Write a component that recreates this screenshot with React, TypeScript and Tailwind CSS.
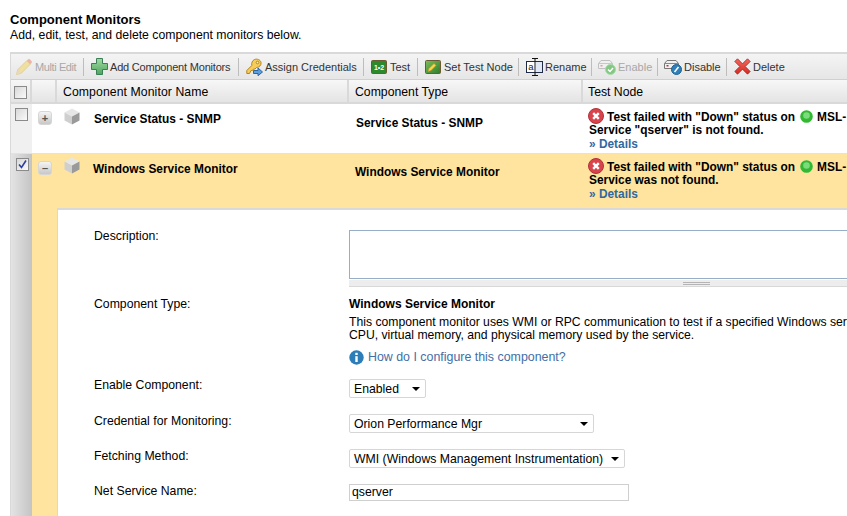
import type { ReactNode } from "react";

const PencilIcon = () => (
  <svg width="18" height="18" viewBox="0 0 18 18">
    <path d="M1.5 16.5l1.2-4.7L11.8 2.7l3.5 3.5-9.1 9.1z" fill="#f0e0a0" stroke="#e0cf98" />
    <path d="M11.8 2.7l1.2-1.2c.6-.6 1.4-.6 2 0l1.5 1.5c.6.6.6 1.4 0 2l-1.2 1.2z" fill="#eeb4a8" />
    <path d="M1.5 16.5l1.2-4.7 3.5 3.5z" fill="#e8d8c0" />
  </svg>
);

const PlusIcon = () => (
  <svg width="17" height="17" viewBox="0 0 17 17">
    <defs>
      <linearGradient id="plusFill" x1="0" y1="0" x2="0" y2="1">
        <stop offset="0" stopColor="#a3d9a3" />
        <stop offset="1" stopColor="#4ea65e" />
      </linearGradient>
    </defs>
    <path d="M5.5.5h6v5h5v6h-5v5h-6v-5h-5v-6h5z" fill="url(#plusFill)" stroke="#3a7f55" />
  </svg>
);

const KeyIcon = () => (
  <svg width="17" height="18" viewBox="0 0 17 18">
    <path d="M8.5 1.5c2.5-1 6 .2 6.5 3 .5 2.6-1.8 5-4.5 5L9 11H7.5L6.5 12.5H5L3.5 15.5H.8v-3l5-5c-.6-2.5.6-5 2.7-6z" fill="#f6cd5a" stroke="#b5841d" />
    <circle cx="11.5" cy="4.5" r="1.3" fill="#fff4c8" stroke="#b5841d" />
    <path d="M7.5 12.5h4.5v-2.5l4.5 4-4.5 3.7v-2.2H7.5z" fill="#5c9fdc" stroke="#2b63a5" />
  </svg>
);

const TestIcon = () => (
  <svg width="16" height="14" viewBox="0 0 16 14">
    <rect x="0.5" y="0.5" width="15" height="13" rx="1" fill="#2c8a2c" stroke="#6e5a32" />
    <text x="8" y="9.5" fontSize="7" fontWeight="700" fill="#fff" textAnchor="middle" fontFamily="Liberation Sans">1•2</text>
  </svg>
);

const NodeIcon = () => (
  <svg width="16" height="14" viewBox="0 0 16 14">
    <defs>
      <linearGradient id="boardFill" x1="0" y1="0" x2="1" y2="1">
        <stop offset="0" stopColor="#7cc05a" />
        <stop offset="1" stopColor="#2c7a2c" />
      </linearGradient>
    </defs>
    <rect x="0.5" y="0.5" width="15" height="13" rx="1" fill="url(#boardFill)" stroke="#6e5a32" />
    <path d="M3 11.5l1-3 5-5 2 2-5 5z" fill="#f6d64a" stroke="#c9902a" strokeWidth="0.6" />
  </svg>
);

const RenameIcon = () => (
  <svg width="17" height="18" viewBox="0 0 17 18">
    <rect x="0.5" y="3.5" width="16" height="11" fill="#fff" stroke="#1f2a44" />
    <rect x="10" y="4" width="6" height="10" fill="#dfe8f4" />
    <text x="5" y="12" fontSize="9.5" fill="#222" textAnchor="middle" fontFamily="Liberation Sans">a</text>
    <path d="M6 .5h6M9 .5v17M6 17.5h6" fill="none" stroke="#111" />
  </svg>
);

const ServerIcon = ({ off }: { off?: boolean }) => (
  <svg width="18" height="16" viewBox="0 0 18 16">
    <path d="M3 1.5h9l2.5 3v5h-14v-5z" fill="#f0f0f0" stroke={off ? "#c0c0c0" : "#777"} />
    <path d="M.5 4.5h14" stroke={off ? "#c8c8c8" : "#888"} />
    <rect x="2.5" y="6" width="2" height="1.5" fill={off ? "#e29a9a" : "#b33"} />
    <circle cx="12.5" cy="10.5" r="5" fill={off ? "#82c882" : "#2f7fb8"} stroke={off ? "#a8d8a8" : "#1f5f8f"} />
    {off ? (
      <path d="M10 10.5l2 2 3-3.5" fill="none" stroke="#fff" strokeWidth="1.5" />
    ) : (
      <path d="M10.5 13l4-5" fill="none" stroke="#fff" strokeWidth="1.5" />
    )}
  </svg>
);

const DeleteIcon = () => (
  <svg width="17" height="17" viewBox="0 0 17 17">
    <defs>
      <linearGradient id="deleteFill" x1="0" y1="0" x2="0" y2="1">
        <stop offset="0" stopColor="#f2695e" />
        <stop offset="1" stopColor="#d42a24" />
      </linearGradient>
    </defs>
    <path d="M.8 3.5L3.5.8 8.5 5.8 13.5.8 16.2 3.5 11.2 8.5 16.2 13.5 13.5 16.2 8.5 11.2 3.5 16.2.8 13.5 5.8 8.5z" fill="url(#deleteFill)" stroke="#a82420" strokeWidth="0.8" />
  </svg>
);

const ErrorIcon = () => (
  <svg width="16" height="16" viewBox="0 0 16 16" className="shrink-0">
    <circle cx="8" cy="8" r="7.5" fill="#d9434c" stroke="#b0323a" />
    <path d="M5.2 5.2l5.6 5.6M10.8 5.2l-5.6 5.6" stroke="#fff" strokeWidth="2.4" />
  </svg>
);

const GreenDot = () => (
  <svg width="13" height="13" viewBox="0 0 13 13" className="shrink-0">
    <circle cx="6.5" cy="6.5" r="6.3" fill="#33b833" />
    <circle cx="6.5" cy="5.5" r="3.3" fill="#7cdc7c" />
  </svg>
);

const CubeIcon = () => (
  <svg width="16" height="17" viewBox="0 0 16 17" className="shrink-0">
    <path d="M8 .5l7.5 4L8 8.5.5 4.5z" fill="#e6e6e6" />
    <path d="M.5 4.5L8 8.5v8l-7.5-4z" fill="#cfcfcf" />
    <path d="M15.5 4.5L8 8.5v8l7.5-4z" fill="#9a9a9a" />
  </svg>
);

const InfoIcon = () => (
  <svg width="15" height="15" viewBox="0 0 15 15" className="shrink-0">
    <circle cx="7.5" cy="7.5" r="7.2" fill="#2c7db8" />
    <rect x="6.3" y="6.2" width="2.4" height="5.8" fill="#fff" />
    <rect x="6.3" y="2.8" width="2.4" height="2.2" fill="#fff" />
  </svg>
);

const tools = [
  { label: "Multi Edit", icon: <PencilIcon />, off: true, textClass: "w-[41px] tracking-[-0.4px]" },
  { label: "Add Component Monitors", icon: <PlusIcon />, textClass: "w-[121px] tracking-[-0.2px]" },
  { label: "Assign Credentials", icon: <KeyIcon />, textClass: "w-[91px]" },
  { label: "Test", icon: <TestIcon />, textClass: "w-[20px]" },
  { label: "Set Test Node", icon: <NodeIcon />, textClass: "w-[67px]" },
  { label: "Rename", icon: <RenameIcon />, textClass: "w-[39px]" },
  { label: "Enable", icon: <ServerIcon off />, off: true, textClass: "w-[32px]" },
  { label: "Disable", icon: <ServerIcon />, textClass: "w-[35px]" },
  { label: "Delete", icon: <DeleteIcon />, textClass: "w-[30px]" },
];

const CheckBox = ({ checked }: { checked?: boolean }) => (
  <span className="flex w-[13px] h-[13px] shrink-0 items-center justify-center border border-[#8a8a8a] bg-gradient-to-br from-[#d8d8d8] to-[#fafafa]">
    {checked && (
      <svg width="11" height="11" viewBox="0 0 11 11">
        <path d="M2 5.5l2.5 3L9 1.5" fill="none" stroke="#2f3f9f" strokeWidth="1.6" />
      </svg>
    )}
  </span>
);

const ExpandButton = ({ sign }: { sign: string }) => (
  <span className="flex w-[14px] h-[14px] items-center justify-center rounded-[3px] border border-[#d6d6d6] bg-gradient-to-b from-[#f4f4f4] to-[#c8c8c8] text-[#555] text-[11px] font-bold leading-none">
    {sign}
  </span>
);

const TestResult = ({ message }: { message: string }) => (
  <div className="pl-[5px] font-bold text-[11.9px] whitespace-nowrap">
    <div className="flex items-center h-[16px]">
      <ErrorIcon />
      <span className="ml-[3px] mt-[3px]">Test failed with "Down" status on</span>
      <span className="ml-[5px] mr-[4px]"><GreenDot /></span>
      <span className="mt-[3px]">MSL-</span>
    </div>
    <div className="pl-[1px] leading-[13px]">{message}</div>
    <div className="pl-[1px] leading-[14px] text-[#31699f]">» Details</div>
  </div>
);

const SelectBox = ({ label, width }: { label: string; width: string }) => (
  <div className={`flex items-center justify-between h-[19px] rounded-[2px] border border-[#d6d6d6] bg-white pl-[4px] pr-[5px] ${width}`}>
    <span className="pt-[1px]">{label}</span>
    <span className="w-0 h-0 border-x-[4px] border-x-transparent border-t-[4px] border-t-black" />
  </div>
);

const FormRow = ({ label, className, labelClass, children }: { label: string; className: string; labelClass?: string; children: ReactNode }) => (
  <div className={`flex ${className}`}>
    <div className={`w-[291px] shrink-0 pl-[36px] leading-[13px] ${labelClass ?? ""}`}>{label}</div>
    <div className="flex-1 min-w-0">{children}</div>
  </div>
);

const headerCell = "h-full flex items-center shrink-0 pt-[2px] border-r-2 border-[#d9d9d9]";

export default function App() {
  return (
    <div className="w-[847px] h-[516px] overflow-hidden bg-white text-[12.25px] text-black pl-[10px] pt-[13px] font-['Liberation_Sans',sans-serif]">
      <h1 className="text-[13px] font-bold leading-[14px]">Component Monitors</h1>
      <p className="leading-[14px] mt-[1px]">Add, edit, test, and delete component monitors below.</p>

      <div className="mt-[10px] w-[1100px] border-t-2 border-l border-[#d9d9d9]">
        <div className="flex items-center h-[26px] bg-gradient-to-b from-[#f4f4f4] to-[#e6e6e6] border-b border-[#d0d0d0] pl-[4px]">
          {tools.map((tool, i) => (
            <div key={tool.label} className="flex items-center">
              {i > 0 && <span className="w-px h-[18px] bg-[#bdbdbd] ml-[7px] mr-[6px]" />}
              <span className="flex w-[18px] justify-center">{tool.icon}</span>
              <span className={`ml-[2px] pt-[2px] text-[11px] whitespace-nowrap ${tool.textClass} ${tool.off ? "text-[#a8a8a8]" : "text-[#333]"}`}>
                {tool.label}
              </span>
            </div>
          ))}
        </div>

        <div className="flex h-[24px] items-center bg-gradient-to-b from-[#f7f7f7] to-[#e4e4e4] border-b-2 border-[#d9d9d9]">
          <div className={`${headerCell} w-[21px] justify-center`}><CheckBox /></div>
          <div className={`${headerCell} w-[25px]`} />
          <div className={`${headerCell} w-[292px] pl-[6px] tracking-[0.08px]`}>Component Monitor Name</div>
          <div className={`${headerCell} w-[234px] pl-[6px]`}>Component Type</div>
          <div className="flex-1 pl-[5px] pt-[2px]">Test Node</div>
        </div>

        <div className="flex h-[49px] items-start text-[11.9px]">
          <div className="flex w-[21px] h-full shrink-0 justify-center pt-[4px] bg-[#f0f0f0]"><CheckBox /></div>
          <div className="flex w-[25px] shrink-0 pl-[6px] pt-[7px]"><ExpandButton sign="+" /></div>
          <div className="flex w-[292px] shrink-0 items-start pl-[7px] pt-[4px]">
            <CubeIcon />
            <span className="ml-[14px] mt-[3px] font-bold">Service Status - SNMP</span>
          </div>
          <div className="w-[234px] shrink-0 pl-[7px] pt-[11px] font-bold">Service Status - SNMP</div>
          <div className="flex-1 pt-[4px]"><TestResult message={'Service "qserver" is not found.'} /></div>
        </div>

        <div className="flex h-[55px] items-start bg-[#fee49f] border-t border-[#efe3bd] text-[11.9px]">
          <div className="flex w-[21px] h-full shrink-0 justify-center pt-[4px] border-l border-[#f0e4b8] bg-gradient-to-r from-[#e2e2e2] to-[#c4c4c4]"><CheckBox checked /></div>
          <div className="flex w-[25px] shrink-0 pl-[6px] pt-[7px]"><ExpandButton sign="–" /></div>
          <div className="flex w-[292px] shrink-0 items-start pl-[7px] pt-[3px]">
            <CubeIcon />
            <span className="ml-[13px] mt-[4px] font-bold">Windows Service Monitor</span>
          </div>
          <div className="w-[234px] shrink-0 pl-[6px] pt-[10px] font-bold">Windows Service Monitor</div>
          <div className="flex-1 pt-[4px]"><TestResult message="Service was not found." /></div>
        </div>

        <div className="flex h-[308px]">
          <div className="w-[21px] shrink-0 border-l border-[#f0e4b8] bg-gradient-to-r from-[#e2e2e2] to-[#c4c4c4]" />
          <div className="w-[25px] shrink-0 bg-[#fee49f]" />
          <div className="flex-1 min-w-0 border-t-2 border-l border-[#d9d9d9] pt-[20px]">
            <FormRow label="Description:" className="h-[67px]">
              <div className="h-[49px] w-[695px] border border-[#97aec9] bg-white" />
              <div className="flex h-[7px] mt-[1px] w-[695px] items-center justify-center border-b border-[#d8d8d8] bg-[#ededed]">
                <span className="w-[27px] h-[3px] border-y border-[#b5b5b5]" />
              </div>
            </FormRow>
            <FormRow label="Component Type:" className="h-[82px]" labelClass="mt-[1px]">
              <div className="text-[12px] font-bold leading-[14px]">Windows Service Monitor</div>
              <div className="text-[12.2px] leading-[13px] mt-[5px] whitespace-nowrap">
                This component monitor uses WMI or RPC communication to test if a specified Windows service
                <br />
                CPU, virtual memory, and physical memory used by the service.
              </div>
              <div className="flex items-center mt-[6px] text-[12.4px] text-[#446ea6]">
                <InfoIcon />
                <span className="ml-[4px]">How do I configure this component?</span>
              </div>
            </FormRow>
            <FormRow label="Enable Component:" className="h-[35px]">
              <SelectBox label="Enabled" width="w-[77px]" />
            </FormRow>
            <FormRow label="Credential for Monitoring:" className="h-[35px]" labelClass="mt-[1px]">
              <SelectBox label="Orion Performance Mgr" width="w-[245px]" />
            </FormRow>
            <FormRow label="Fetching Method:" className="h-[35px]" labelClass="mt-[1px]">
              <SelectBox label="WMI (Windows Management Instrumentation)" width="w-[276px]" />
            </FormRow>
            <FormRow label="Net Service Name:" className="h-[20px]" labelClass="mt-[1px]">
              <div className="h-[17px] w-[280px] border border-[#cfcfcf] pl-[2px] leading-[15px] bg-white">qserver</div>
            </FormRow>
          </div>
        </div>
      </div>
    </div>
  );
}
